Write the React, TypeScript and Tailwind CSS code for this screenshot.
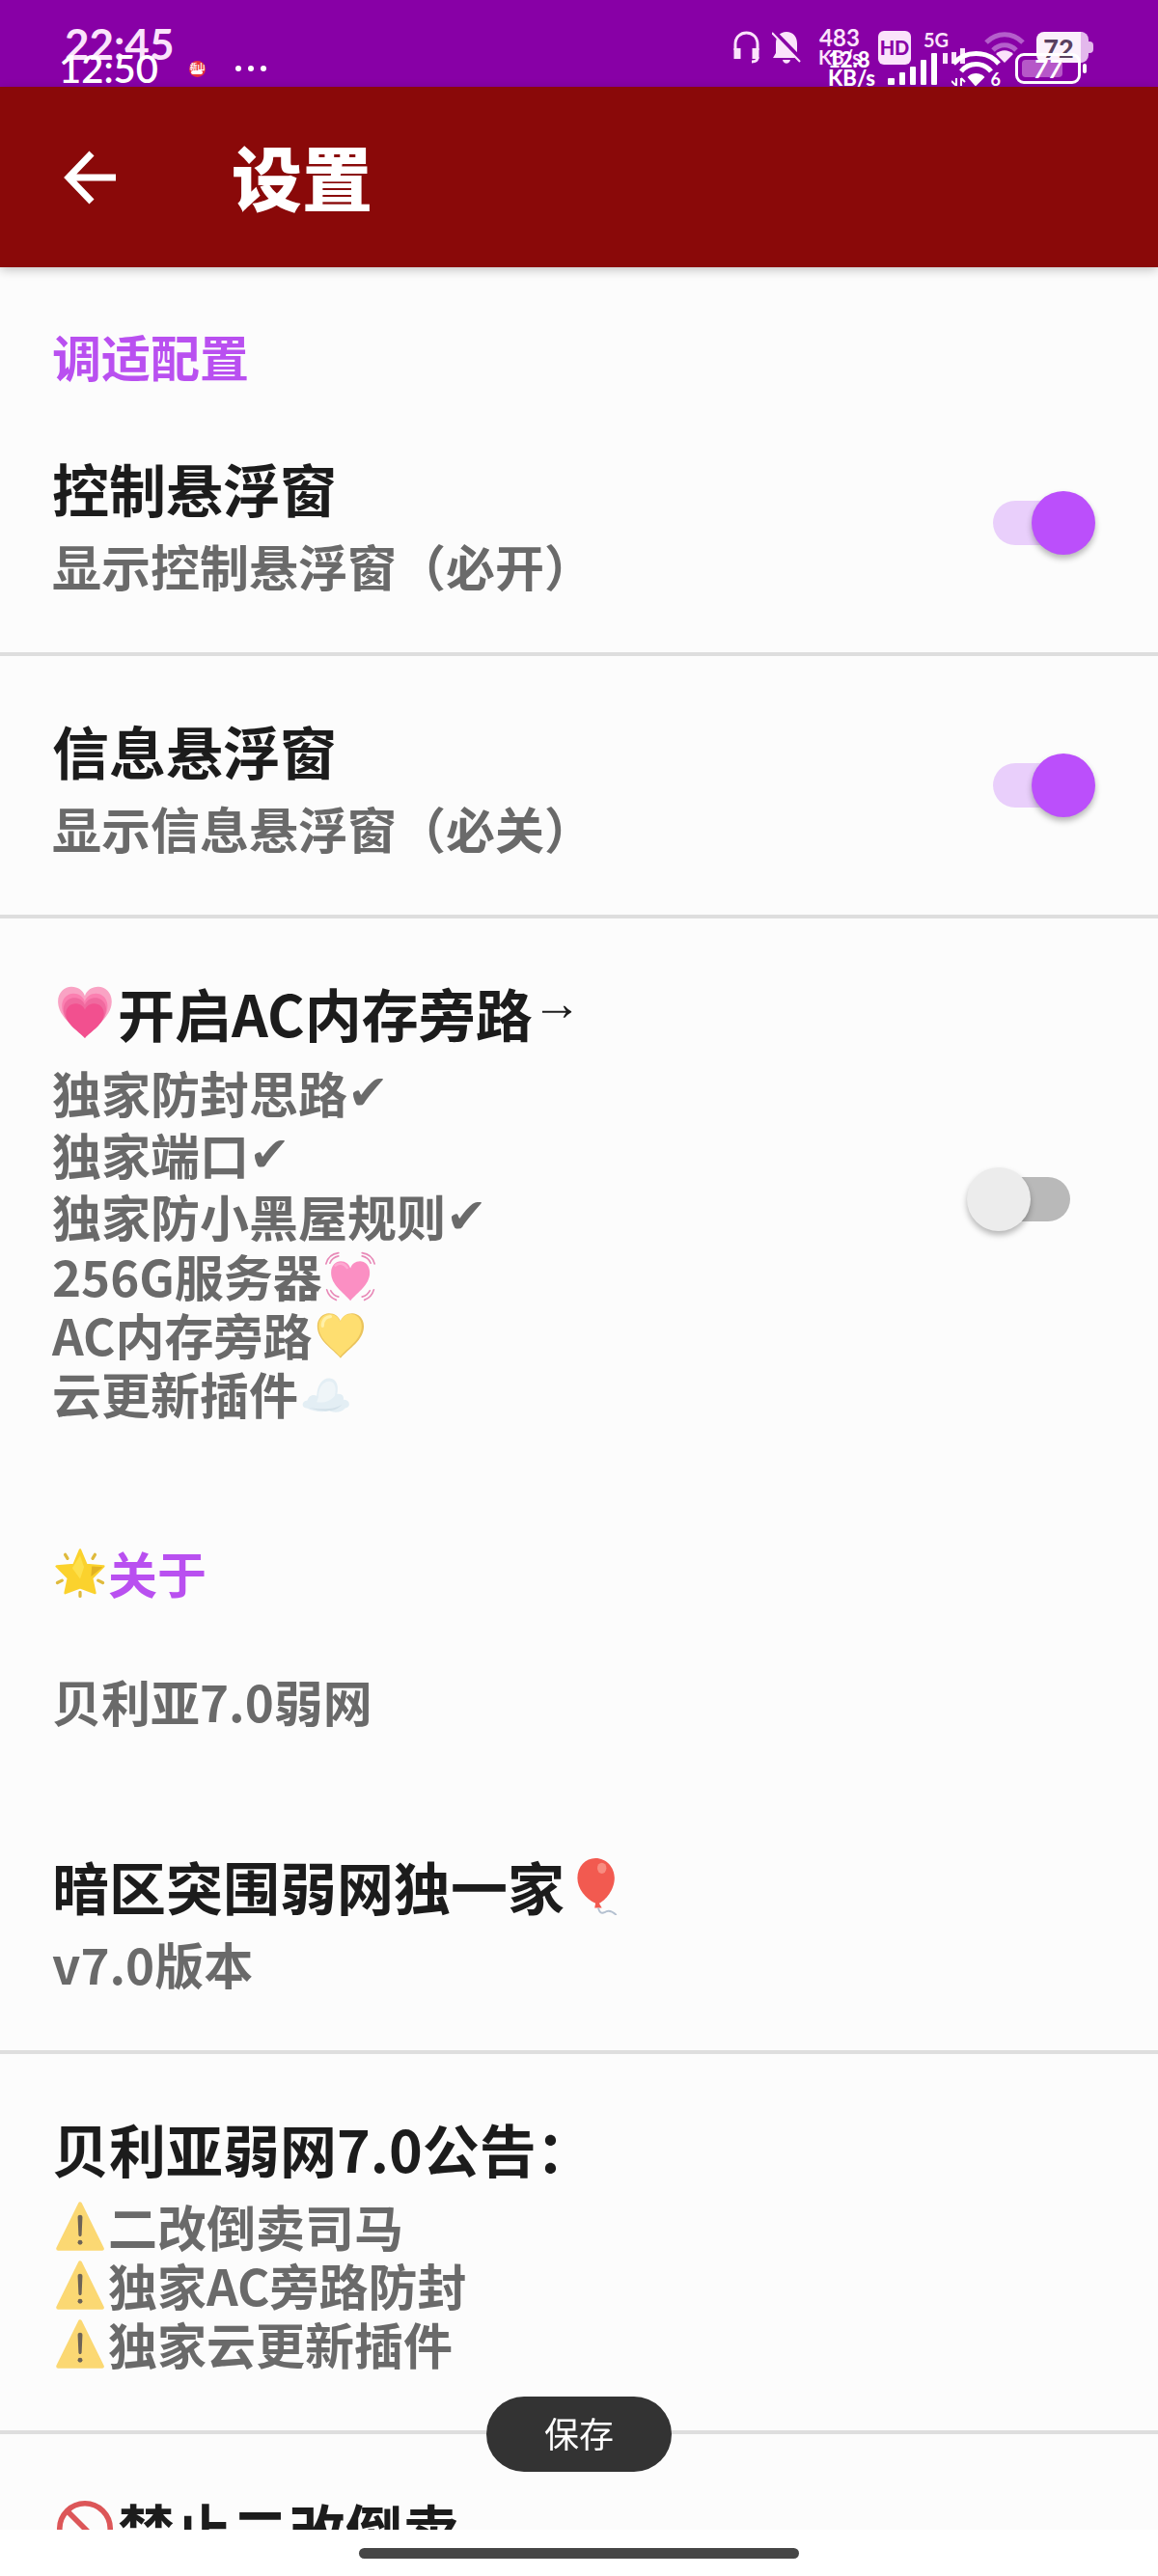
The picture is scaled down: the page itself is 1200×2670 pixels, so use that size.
import React, { useState } from 'react';

type IconProps = { className?: string };

/* ---------- emoji drawings ---------- */

const HEART = 'M32 60C22 48 4 38 4 20C4 10 11 4 18 4C25 4 30 8 32 14C34 8 39 4 46 4C53 4 60 10 60 20C60 38 42 48 32 60Z';

const GrowingHeart: React.FC<IconProps> = ({ className }) => (
  <svg viewBox="0 0 64 64" className={className} role="img" aria-label="💗">
    <path d={HEART} fill="#f9a3c4" transform="translate(-2 -1) scale(1.06 1)" />
    <path d={HEART} fill="#fb7fb0" transform="translate(3 7) scale(.9 .86)" />
    <path d={HEART} fill="#f06a9f" transform="translate(5 12) scale(.84 .79)" />
    <path d={HEART} fill="#f2508f" transform="translate(8 19) scale(.75 .68)" />
  </svg>
);

const BeatingHeart: React.FC<IconProps> = ({ className }) => (
  <svg viewBox="0 0 64 64" className={className} role="img" aria-label="💓">
    <path d={HEART} fill="#fb8fc3" transform="translate(4 9) scale(.88 .9)" />
    <path d="M13 18C17 14 24 15 28 21" fill="none" stroke="#fda9d2" strokeWidth="3" strokeLinecap="round" />
    <g fill="none" stroke="#e88ab8" strokeWidth="2" strokeLinecap="round">
      <path d="M1 16C3 8 9 3 17 2M6 15C8 10 12 7 17 6" />
      <path d="M63 16C61 8 55 3 47 2M58 15C56 10 52 7 47 6" />
      <path d="M2 49C4 56 8 60 14 62M7 50C9 54 13 57 17 58" />
      <path d="M62 49C60 56 56 60 50 62M57 50C55 54 51 57 47 58" />
    </g>
  </svg>
);

const YellowHeart: React.FC<IconProps> = ({ className }) => (
  <svg viewBox="0 0 64 64" className={className} role="img" aria-label="💛">
    <path d={HEART} fill="#eac35c" transform="translate(-2 0) scale(1.06 1.02)" />
    <path d={HEART} fill="#fede70" transform="translate(0 1) scale(.98 .97)" />
    <path d="M9 20C9 12 14 8 19 8" fill="none" stroke="#fff0a8" strokeWidth="4" strokeLinecap="round" />
  </svg>
);

const Cloud: React.FC<IconProps> = ({ className }) => (
  <svg viewBox="0 0 64 64" className={className} role="img" aria-label="☁️">
    <path d="M8 50C0 50 0 41 8 40C10 33 16 32 20 34C21 18 29 10 38 12C46 14 48 22 46 32C52 31 55 35 54 39C63 39 64 49 56 50C52 56 40 56 36 53C28 56 16 54 8 50Z" fill="#e3eef4" />
    <path d="M22 36C22 22 30 14 38 16C44 18 45 26 43 34C38 40 30 44 20 42Z" fill="#eff5f8" />
    <path d="M10 49C24 52 44 52 52 45C46 56 24 55 10 49Z" fill="#d3e1e9" />
  </svg>
);

const GlowingStar: React.FC<IconProps> = ({ className }) => (
  <svg viewBox="0 0 64 64" className={className} role="img" aria-label="🌟">
    <path d="M32 3L40 22L62 24L47 39L51 58L32 51L13 58L17 39L2 24L24 22Z" fill="#fbd22d" stroke="#fbd22d" strokeWidth="3" strokeLinejoin="round" />
    <path d="M47 24L61 25L46 37Z" fill="#e2b224" />
    <path d="M32 10L37 25L32 40L22 26Z" fill="#fde04c" />
    <g stroke="#dfba3c" strokeWidth="4" strokeLinecap="round">
      <path d="M13 9L16 14M51 9L48 14M3 45L9 42M61 45L55 42M32 57V62" />
    </g>
  </svg>
);

const Balloon: React.FC<IconProps> = ({ className }) => (
  <svg viewBox="0 0 64 64" className={className} role="img" aria-label="🎈">
    <path d="M30 1C42 1 51 11 51 23C51 36 41 48 34 51L37 56H29L30 51C19 46 10 35 10 23C10 10 19 1 30 1Z" fill="#f25a50" />
    <ellipse cx="37" cy="12" rx="5" ry="6" fill="#f88c80" />
    <path d="M33 56C34 60 36 63 40 61C44 58 49 60 53 64" fill="none" stroke="#b4c0d0" strokeWidth="2" />
  </svg>
);

const Warning: React.FC<IconProps> = ({ className }) => (
  <svg viewBox="0 0 64 64" className={className} role="img" aria-label="⚠️">
    <path d="M32 3L60 60H4Z" fill="#fbd873" stroke="#fbd873" strokeWidth="5" strokeLinejoin="round" />
    <path d="M29 20C29 16 35 16 35 20L34 42C34 45 30 45 30 42Z" fill="#6d6357" />
    <circle cx="32" cy="52" r="3" fill="#6d6357" />
  </svg>
);

const Prohibited: React.FC<IconProps> = ({ className }) => (
  <svg viewBox="0 0 64 64" className={className} role="img" aria-label="🚫">
    <circle cx="32" cy="32" r="28" fill="none" stroke="#dc5658" strokeWidth="6" />
    <path d="M12 12L52 52" stroke="#dc5658" strokeWidth="6" />
  </svg>
);

/* ---------- status bar ---------- */

const Wifi: React.FC<IconProps> = ({ className }) => (
  <svg viewBox="0 0 42 34" className={className} fill="none" strokeWidth="5">
    <path d="M2 12C13 1 29 1 40 12" stroke="#b45fcb" />
    <path d="M9 20C16 13 26 13 33 20" stroke="#b45fcb" />
    <path d="M21 33L12 24C17 19 25 19 30 24Z" fill="#fbe3fb" />
  </svg>
);

const StatusBar = () => (
  <div className="relative h-[90px] shrink-0 bg-[#8800a6] font-['Lato','Noto_Sans_CJK_SC',sans-serif] text-[#fbe3fb]">
    <div className="flex h-full items-center pt-2 pr-[67px] pl-[67px]">
      <span className="pb-2 text-[44px] leading-none font-bold">22:45</span>
      <svg viewBox="0 0 27 34" className="ml-auto h-[34px] w-[27px]" fill="none" stroke="currentColor" strokeWidth="3">
        <path d="M2 20V14C2 -2 25 -2 25 14V20" />
        <path d="M4 18V29M23 18V29" strokeWidth="7" />
        <path d="M25 27C25 31 23 32 19 32" />
      </svg>
      <svg viewBox="0 0 30 34" className="ml-[13px] h-[34px] w-[30px]" fill="currentColor">
        <path d="M15 1C22 1 26 6 26 13V23L29 28H1L4 23V13C4 6 8 1 15 1ZM11 30H19C18 35 12 35 11 30Z" />
        <path d="M1 0L31 31" stroke="#8800a6" strokeWidth="5" />
        <path d="M0 2L29 32" stroke="currentColor" strokeWidth="2" />
      </svg>
      <div className="ml-[17px] w-[46px] text-center text-[24px] leading-[20px] font-bold">
        <div>483</div>
        <div className="text-[20px]">KB/s</div>
      </div>
      <span className="ml-[17px] flex h-[35px] w-[34px] items-center justify-center rounded-md bg-[#fbe3fb] text-[20px] font-black text-[#8800a6]">
        HD
      </span>
      <div className="ml-[13px] flex h-[34px] w-[48px] flex-col">
        <span className="text-[20px] leading-[18px] font-bold">5G</span>
        <svg viewBox="0 0 48 16" className="h-[16px] w-[48px]" fill="currentColor">
          <path d="M20 5h5v11h-5zM29 4h5v12h-5zM38 0h5v16h-5z" />
        </svg>
      </div>
      <Wifi className="ml-[15px] h-[34px] w-[42px]" />
      <div className="ml-[12px] flex items-center">
        <span className="flex h-[32px] w-[54px] items-center justify-center rounded-lg border-r-8 border-[#e3b8ec] bg-[#fbf0fb] text-[27px] leading-none font-black text-[#59405f]">
          72
        </span>
        <span className="h-[12px] w-[5px] rounded-r bg-[#e3b8ec]" />
      </div>
    </div>

    {/* second set of indicators, drawn over the first one */}
    <div className="absolute inset-x-0 bottom-0 flex h-[38px] items-center pr-[74px] pl-[61px] text-white">
      <span className="text-[40px] leading-none font-semibold">12:50</span>
      <span className="ml-8 flex h-[17px] w-[17px] flex-col items-center justify-center overflow-hidden rounded-full bg-[#e8343c] text-[8px] leading-none font-bold">
        新山
        <span className="h-[4px] w-[12px] rounded-sm bg-white" />
      </span>
      <svg viewBox="0 0 34 8" className="ml-[30px] h-[8px] w-[34px]" fill="currentColor">
        <circle cx="4" cy="4" r="3" />
        <circle cx="17" cy="4" r="3" />
        <circle cx="30" cy="4" r="3" />
      </svg>
      <div className="ml-auto w-[51px] text-[22px] leading-[19px] font-black">
        <div>12.8</div>
        <div>KB/s</div>
      </div>
      <svg viewBox="0 0 52 34" className="ml-[11px] h-[34px] w-[52px]" fill="currentColor">
        <rect x="0" y="27" width="7" height="7" rx="1" />
        <rect x="12" y="21" width="6" height="13" rx="1" />
        <rect x="23" y="15" width="6" height="19" rx="1" />
        <rect x="34" y="8" width="6" height="26" rx="1" />
        <rect x="45" y="1" width="6" height="33" rx="1" />
      </svg>
      <div className="relative ml-[14px]">
        <svg viewBox="0 0 51 36" className="h-[36px] w-[51px]" fill="none" stroke="currentColor" strokeWidth="5">
          <path d="M2 13C14 -1 37 -1 49 13" />
          <path d="M10 21C18 11 33 11 41 21" />
          <path d="M25 35L18 27C22 23 29 23 33 27Z" fill="currentColor" strokeWidth="2" />
          <path d="M5 36V28M5 36L0 31M10 36V28M10 28L14 32" strokeWidth="2" />
        </svg>
        <span className="absolute right-0 bottom-0 text-[18px] leading-[14px] font-bold">6</span>
      </div>
      <div className="ml-[15px] flex w-[74px] items-center gap-[2px]">
        <span className="flex h-[32px] w-[68px] items-center rounded-[9px] border-[3px] border-white p-1">
          <span className="flex h-full w-[42px] items-center justify-end rounded-sm bg-[#b658c8] text-[26px] leading-none font-bold italic">
            77
          </span>
        </span>
        <span className="h-[10px] w-[4px] rounded bg-white" />
      </div>
    </div>
  </div>
);

/* ---------- settings list ---------- */

interface SwitchProps {
  id: string;
  checked: boolean;
  onChange: (checked: boolean) => void;
}

const Switch: React.FC<SwitchProps> = ({ id, checked, onChange }) => (
  <input
    type="checkbox"
    role="switch"
    id={id}
    checked={checked}
    onChange={(e) => onChange(e.target.checked)}
    className="relative h-[66px] w-[134px] shrink-0 cursor-pointer appearance-none before:absolute before:top-[10px] before:left-[27px] before:h-[46px] before:w-[80px] before:rounded-full before:bg-[#b9b9b9] after:absolute after:top-0 after:left-0 after:h-[66px] after:w-[66px] after:rounded-full after:bg-[#ececec] after:shadow-[0_4px_6px_rgba(0,0,0,0.28)] checked:before:bg-[#e9cffb] checked:after:left-[67px] checked:after:bg-[#bb4ffb]"
  />
);

const SectionTitle: React.FC<{ children: React.ReactNode }> = ({ children }) => (
  <h2 className="flex items-center px-[54px] pt-[60px] pb-[7px] text-[51px] leading-[64px] font-bold text-[#b950f0]">
    {children}
  </h2>
);

interface RowProps {
  title?: React.ReactNode;
  children?: React.ReactNode;
  divider?: boolean;
  htmlFor?: string;
  control?: React.ReactNode;
}

const Row: React.FC<RowProps> = ({ title, children, divider = false, htmlFor, control }) => {
  const Title = htmlFor ? 'label' : 'h3';
  return (
    <div
      className={`flex items-center justify-between border-b-4 pr-[64px] pl-[54px] ${
        divider ? 'border-[#dedede]' : 'border-transparent'
      }`}
    >
      <div
        className={`pb-[59px] text-[51px] leading-[61px] font-bold text-[#6a6a6a] ${
          title ? 'pt-[48px]' : 'pt-[64px]'
        }`}
      >
        {title && (
          <Title htmlFor={htmlFor} className="flex items-center text-[59px] leading-[100px] text-[#1c1c1c]">
            {title}
          </Title>
        )}
        {children}
      </div>
      {control}
    </div>
  );
};

const CheckLine: React.FC<{ children: React.ReactNode }> = ({ children }) => (
  <p className="flex h-[64px] items-center">
    {children}
    <span className="font-['DejaVu_Sans'] leading-none font-normal">✔</span>
  </p>
);

const smallEmoji = 'mx-[3px] h-[52px] w-[52px] shrink-0';
const largeEmoji = 'mx-1 h-[60px] w-[60px] shrink-0';

export default function App() {
  const [control, setControl] = useState(true);
  const [info, setInfo] = useState(true);
  const [bypass, setBypass] = useState(false);

  return (
    <div className="flex h-screen flex-col bg-white font-['Noto_Sans_CJK_SC',sans-serif]">
      <StatusBar />

      <header className="z-10 flex h-[187px] shrink-0 items-center bg-[#8a0909] pl-[64px] text-white shadow-[0_3px_10px_rgba(0,0,0,0.22)]">
        <button type="button" aria-label="返回" className="cursor-pointer">
          <svg viewBox="0 0 60 60" className="h-[60px] w-[60px]" fill="none" stroke="currentColor" strokeWidth="7">
            <path d="M56 30H8M31 5L7 30L31 55" />
          </svg>
        </button>
        <h1 className="ml-[116px] pb-1 text-[73px] leading-none font-black">设置</h1>
      </header>

      <div className="relative min-h-0 flex-1">
        <main className="h-full overflow-y-auto bg-[#fcfcfc] [scrollbar-width:none]">
          <SectionTitle>调适配置</SectionTitle>
          <Row
            title="控制悬浮窗"
            htmlFor="control"
            divider
            control={<Switch id="control" checked={control} onChange={setControl} />}
          >
            <p>显示控制悬浮窗（必开）</p>
          </Row>
          <Row
            title="信息悬浮窗"
            htmlFor="info"
            divider
            control={<Switch id="info" checked={info} onChange={setInfo} />}
          >
            <p>显示信息悬浮窗（必关）</p>
          </Row>
          <Row
            title={
              <>
                <GrowingHeart className={largeEmoji} />
                开启AC内存旁路
                <span className="pb-5 font-['Liberation_Serif'] text-[51px] leading-[80px] font-normal">→</span>
              </>
            }
            htmlFor="bypass"
            control={<Switch id="bypass" checked={bypass} onChange={setBypass} />}
          >
            <CheckLine>独家防封思路</CheckLine>
            <CheckLine>独家端口</CheckLine>
            <CheckLine>独家防小黑屋规则</CheckLine>
            <p className="flex items-center">256G服务器<BeatingHeart className={smallEmoji} /></p>
            <p className="flex items-center">AC内存旁路<YellowHeart className={smallEmoji} /></p>
            <p className="flex items-center">云更新插件<Cloud className={smallEmoji} /></p>
          </Row>

          <SectionTitle>
            <GlowingStar className={smallEmoji} />
            关于
          </SectionTitle>
          <Row>
            <p>贝利亚7.0弱网</p>
          </Row>
          <Row
            title={
              <>
                暗区突围弱网独一家
                <Balloon className={largeEmoji} />
              </>
            }
            divider
          >
            <p>v7.0版本</p>
          </Row>
          <Row title="贝利亚弱网7.0公告：" divider>
            <p className="flex items-center"><Warning className={smallEmoji} />二改倒卖司马</p>
            <p className="flex items-center"><Warning className={smallEmoji} />独家AC旁路防封</p>
            <p className="flex items-center"><Warning className={smallEmoji} />独家云更新插件</p>
          </Row>
          <Row
            title={
              <>
                <Prohibited className={largeEmoji} />
                禁止二改倒卖
              </>
            }
          />
        </main>

        <button
          type="button"
          className="absolute bottom-[60px] left-1/2 h-[78px] w-[192px] -translate-x-1/2 cursor-pointer rounded-full bg-[#333] pb-1 text-[36px] text-white"
        >
          保存
        </button>
      </div>

      <nav className="flex h-[48px] shrink-0 items-center justify-center bg-white">
        <span className="h-[11px] w-[456px] rounded-full bg-[#464646]" />
      </nav>
    </div>
  );
}
